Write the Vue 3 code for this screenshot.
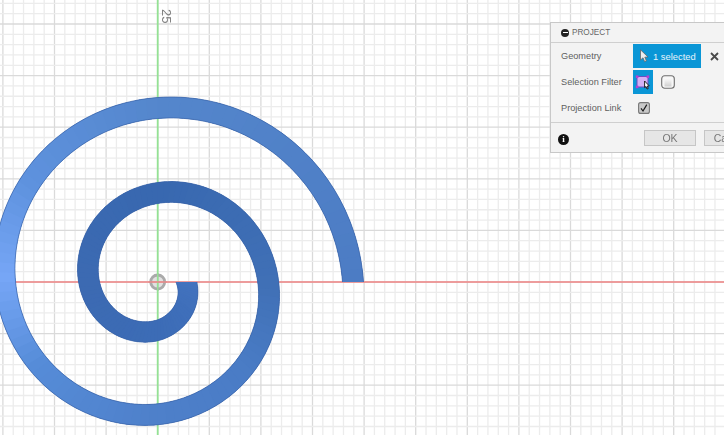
<script setup>
// sketch origin and grid pitch, read off the reference
const cx = 157.7
const cy = 282
const pitch = 10.32
const W = 724
const H = 435

const gridLines = []
for (let i = -16; i <= 56; i++) {
  const x = cx + i * pitch
  if (x >= 0 && x <= W) gridLines.push({ key: 'v' + i, x1: x, y1: 0, x2: x, y2: H, major: i % 5 === 0 })
}
for (let i = -28; i <= 16; i++) {
  const y = cy + i * pitch
  if (y >= 0 && y <= H) gridLines.push({ key: 'h' + i, x1: 0, y1: y, x2: W, y2: y, major: i % 5 === 0 })
}

// centre radius of the spiral at each quarter turn from the inner end
const radii = [28.8, 48.3, 68.6, 89, 110.5, 132.3, 152.6, 174, 195.3]
const HALF = 10.5

function radiusAt(q) {
  // the first quarter eases out of the flat end so the band doesn't bulge past it
  if (q < 1) return radii[0] + (radii[1] - radii[0]) * Math.pow(q, 1.2)
  const i = Math.min(Math.floor(q), radii.length - 2)
  return radii[i] + (radii[i + 1] - radii[i]) * (q - i)
}

// radial offset keeps both ends flat on the red axis
function point(q, offset) {
  const a = (q * Math.PI) / 2
  const r = radiusAt(q) + offset
  return [(cx + r * Math.cos(a)).toFixed(2), (cy + r * Math.sin(a)).toFixed(2)].join(',')
}

// colour along the spiral
const stops = [
  [0, [66, 114, 190]],
  [1, [60, 108, 182]],
  [2, [60, 106, 178]],
  [3, [56, 104, 176]],
  [4, [64, 112, 182]],
  [4.5, [74, 124, 198]],
  [5, [78, 128, 202]],
  [5.6, [86, 140, 216]],
  [6, [118, 166, 246]],
  [6.4, [94, 146, 222]],
  [7, [84, 134, 204]],
  [8, [76, 124, 196]],
]
function colorAt(q) {
  let i = 0
  while (i < stops.length - 2 && q > stops[i + 1][0]) i++
  const [q0, c0] = stops[i]
  const [q1, c1] = stops[i + 1]
  const t = (q - q0) / (q1 - q0)
  const c = c0.map((v, n) => Math.round(v + (c1[n] - v) * t))
  return `rgb(${c[0]},${c[1]},${c[2]})`
}

const STEP = 0.02
const COUNT = Math.round(8 / STEP)
const quads = []
const outerEdge = []
const innerEdge = []
for (let n = 0; n <= COUNT; n++) {
  outerEdge.push(point(n * STEP, HALF))
  innerEdge.push(point(n * STEP, -HALF))
}
// painted in order, each piece runs under the next one so no seams show
for (let n = 0; n < COUNT; n += 2) {
  const end = Math.min(n + 5, COUNT)
  quads.push({
    key: n,
    points: outerEdge.slice(n, end + 1).concat(innerEdge.slice(n, end + 1).reverse()).join(' '),
    color: colorAt(n * STEP),
  })
}
const outerPts = outerEdge.join(' ')
const innerPts = innerEdge.join(' ')
</script>

<template>
  <div class="canvas">
    <svg class="sketch" :width="W" :height="H" :viewBox="`0 0 ${W} ${H}`">
      <line
        v-for="l in gridLines"
        :key="l.key"
        :x1="l.x1"
        :y1="l.y1"
        :x2="l.x2"
        :y2="l.y2"
        :stroke="l.major ? '#dadada' : '#ececec'"
        stroke-width="1.3"
      />
      <line :x1="cx" y1="0" :x2="cx" :y2="H" stroke="#94e294" stroke-width="1.8" />
      <line x1="0" :y1="cy" :x2="W" :y2="cy" stroke="#f08484" stroke-width="1.6" />

      <polygon v-for="s in quads" :key="s.key" :points="s.points" :fill="s.color" />
      <polyline :points="outerPts" fill="none" stroke="#3a63a8" stroke-width="0.7" />
      <polyline :points="innerPts" fill="none" stroke="#3a63a8" stroke-width="0.7" />

      <!-- origin marker -->
      <circle :cx="cx" :cy="cy" r="7" fill="#c4c4c4" fill-opacity="0.5" stroke="#aaa" stroke-width="2.8" />
      <line :x1="cx" :y1="cy - 9" :x2="cx" :y2="cy + 9" stroke="#94e294" stroke-width="1.4" />
      <line :x1="cx - 9" :y1="cy" :x2="cx + 9" :y2="cy" stroke="#f08484" stroke-width="1.3" />
    </svg>

    <span class="ruler">25</span>

    <div class="panel">
      <div class="title">
        <span class="collapse"></span>
        <span>PROJECT</span>
      </div>

      <div class="body">
        <div class="row">
          <span class="label">Geometry</span>
          <button class="pick">
            <svg width="10" height="14" viewBox="0 0 10 14">
              <path d="M1.5 .8 L1.5 11 L4 8.8 L5.6 12.6 L7.4 11.8 L5.8 8.2 L9 8 Z" fill="#eee" stroke="#666" stroke-width=".8" />
            </svg>
            <span>1 selected</span>
          </button>
          <svg class="clear" width="9" height="9" viewBox="0 0 9 9">
            <path d="M1 1 L8 8 M8 1 L1 8" stroke="#4a4a4a" stroke-width="1.8" />
          </svg>
        </div>

        <div class="row">
          <span class="label">Selection Filter</span>
          <button class="filter">
            <svg width="16" height="16" viewBox="0 0 16 16">
              <rect x="2" y="2.5" width="11" height="10.5" fill="#d4b0f5" stroke="#6a4fc0" />
              <rect x=".8" y="1.4" width="2.6" height="2.6" fill="#b83fd0" />
              <rect x="11.6" y="1.4" width="2.6" height="2.6" fill="#b83fd0" />
              <rect x=".8" y="11.6" width="2.6" height="2.6" fill="#b83fd0" />
              <path d="M9.6 7 L9.6 13.6 L11 12.5 L12 15 L13.2 14.5 L12.2 12.1 L14.2 11.9 Z" fill="#fff" stroke="#111" stroke-width=".9" />
            </svg>
          </button>
          <span class="body-icon">
            <svg width="14" height="14" viewBox="0 0 14 14">
              <defs>
                <linearGradient id="solid" x1="0" y1="0" x2="0" y2="1">
                  <stop offset="0" stop-color="#fafafa" />
                  <stop offset="1" stop-color="#cfcfcf" />
                </linearGradient>
              </defs>
              <rect x=".7" y=".7" width="12.6" height="12.6" rx="3" fill="#f7f7f7" stroke="#6e6e6e" stroke-width="1.1" />
              <rect x="3.5" y="3.5" width="7" height="8" fill="url(#solid)" />
            </svg>
          </span>
        </div>

        <div class="row">
          <span class="label">Projection Link</span>
          <span class="check">
            <svg width="12" height="12" viewBox="0 0 12 12">
              <rect x=".6" y=".6" width="10.8" height="10.8" rx="2" fill="#c8c8c8" stroke="#777" stroke-width="1.1" />
              <path d="M3 6.4 L5 9 L8.8 2.6" fill="none" stroke="#1a1a1a" stroke-width="1.2" />
            </svg>
          </span>
        </div>
      </div>

      <div class="footer">
        <span class="info">i</span>
        <button class="btn ok">OK</button>
        <button class="btn cancel">Cancel</button>
      </div>
    </div>
  </div>
</template>

<style scoped>
.canvas {
  position: relative;
  width: 724px;
  height: 435px;
  overflow: hidden;
  background: #fff;
  font-family: 'Liberation Sans', Arial, sans-serif;
}
/* reference is a scaled-up capture, everything sits a bit soft */
.sketch {
  position: absolute;
  left: 0;
  top: 0;
  display: block;
  filter: blur(0.4px);
}
.ruler {
  position: absolute;
  left: 160px;
  top: 9px;
  font-size: 13px;
  line-height: 13px;
  color: #808080;
  writing-mode: vertical-rl;
  filter: blur(0.3px);
}

/* dialog runs off the right edge of the window */
.panel {
  position: absolute;
  left: 550px;
  top: 22px;
  width: 190px;
  height: 131px;
  box-sizing: border-box;
  display: flex;
  flex-direction: column;
  background: #f3f3f3;
  border: 1px solid #c8c8c8;
  color: #5f5f5f;
  font-size: 9.2px;
  filter: blur(0.3px);
}
.title {
  box-sizing: border-box;
  height: 20px;
  flex: none;
  display: flex;
  align-items: center;
  gap: 3px;
  padding-left: 10px;
  border-bottom: 1px solid #cfcfcf;
  color: #666;
  font-size: 8.2px;
}
.collapse {
  position: relative;
  width: 8px;
  height: 8px;
  border-radius: 50%;
  background: #222;
}
.collapse::after {
  content: '';
  position: absolute;
  left: 1.5px;
  right: 1.5px;
  top: 3.5px;
  height: 1px;
  background: #fff;
}
.body {
  flex: 1;
  display: flex;
  flex-direction: column;
  border-bottom: 1px solid #cfcfcf;
}
.row {
  display: flex;
  align-items: center;
  height: 26px;
}
.label {
  width: 72px;
  padding-left: 10px;
  flex: none;
}
.pick {
  width: 68px;
  height: 24px;
  padding: 0 0 0 6px;
  display: flex;
  align-items: center;
  gap: 4px;
  border: 0;
  background: #0a96d6;
  color: #e8f4fb;
  font: inherit;
  font-size: 9.4px;
}
.clear {
  margin-left: 9px;
}
.filter {
  width: 20px;
  height: 24px;
  padding: 0;
  display: flex;
  align-items: center;
  justify-content: center;
  border: 0;
  background: #0a96d6;
}
.body-icon {
  display: flex;
  margin-left: 8px;
}
.check {
  display: flex;
  margin-left: 5px;
}
.footer {
  box-sizing: border-box;
  height: 29px;
  flex: none;
  display: flex;
  align-items: center;
  padding: 1px 0 0 7px;
}
.info {
  flex: none;
  width: 11px;
  height: 11px;
  margin-top: 2px;
  border-radius: 50%;
  background: #111;
  color: #fff;
  font-size: 9px;
  font-weight: 700;
  line-height: 11px;
  text-align: center;
  font-family: 'Liberation Serif', serif;
}
.btn {
  flex: none;
  height: 16px;
  padding: 0;
  border: 1px solid #c6c6c6;
  background: #e6e6e6;
  color: #777;
  font: inherit;
  font-size: 10.5px;
}
.ok {
  width: 52px;
  margin-left: 75px;
}
.cancel {
  width: 52px;
  margin-left: 8px;
}
</style>

<style>
html,
body {
  margin: 0;
  background: #fff;
}
</style>
